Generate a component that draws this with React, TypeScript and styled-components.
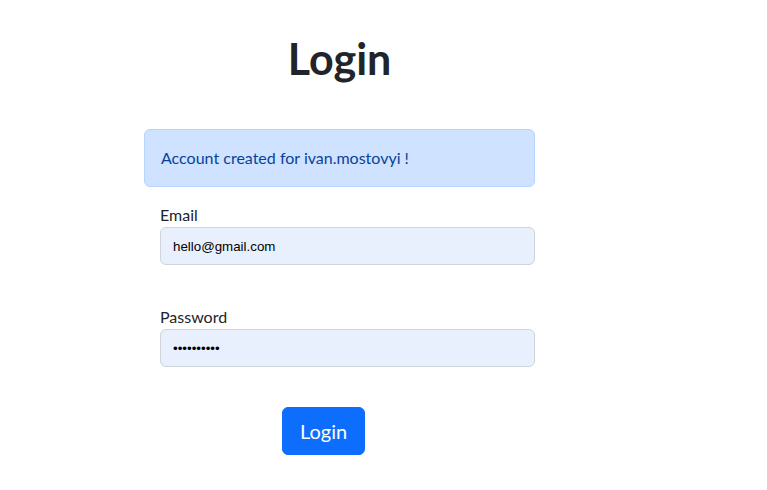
import React from "react";
import styled, { createGlobalStyle } from "styled-components";

const GlobalStyle = createGlobalStyle`
  html, body { margin: 0; padding: 0; background: #ffffff; }
  body {
    font-family: Lato, "Liberation Sans", sans-serif;
    color: #212529;
    font-size: 16px;
    line-height: 1.5;
  }
  * { box-sizing: border-box; }
`;

const Page = styled.main`
  padding: 35px 0 0 144px;
`;

const Container = styled.div`
  width: 391px;
  display: flex;
  flex-direction: column;
`;

const Title = styled.h1`
  margin: 0 0 46px;
  text-align: center;
  font-size: 43px;
  line-height: 48px;
  font-weight: 700;
  color: #212529;
`;

const Alert = styled.div`
  padding: 16px;
  border: 1px solid #b6d4fe;
  border-radius: 6px;
  background: #cfe2ff;
  color: #084298;
  font-size: 16px;
  line-height: 24px;
  margin-bottom: 16px;
`;

const Form = styled.form`
  margin-left: 16px;
  display: flex;
  flex-direction: column;
`;

const Field = styled.div<{ $gap?: number }>`
  display: flex;
  flex-direction: column;
  margin-top: ${(p) => p.$gap ?? 0}px;
`;

const Label = styled.label`
  font-size: 16px;
  line-height: 24px;
  color: #212529;
`;

const Input = styled.input`
  height: 38px;
  padding: 0 12px;
  border: 1px solid #ced4da;
  border-radius: 6px;
  background: #e8f0fe;
  color: #000000;
  font-family: "Liberation Sans", Arial, sans-serif;
  font-size: 13.33px;
  outline: none;
`;

const Actions = styled.div`
  margin-top: 40px;
  padding-left: 122px;
  display: flex;
`;

const Button = styled.button`
  height: 48px;
  padding: 0 17px;
  border: 1px solid #0d6efd;
  border-radius: 6px;
  background: #0d6efd;
  color: #ffffff;
  font-family: Lato, "Liberation Sans", sans-serif;
  font-size: 20px;
  line-height: 30px;
  cursor: pointer;
`;

export default function App() {
  return (
    <>
      <GlobalStyle />
      <Page>
        <Container>
          <Title>Login</Title>
          <Alert>Account created for ivan.mostovyi !</Alert>
          <Form onSubmit={(e) => e.preventDefault()}>
            <Field>
              <Label htmlFor="email">Email</Label>
              <Input id="email" type="email" defaultValue="hello@gmail.com" />
            </Field>
            <Field $gap={40}>
              <Label htmlFor="password">Password</Label>
              <Input id="password" type="password" defaultValue="1234567890" />
            </Field>
            <Actions>
              <Button type="submit">Login</Button>
            </Actions>
          </Form>
        </Container>
      </Page>
    </>
  );
}
